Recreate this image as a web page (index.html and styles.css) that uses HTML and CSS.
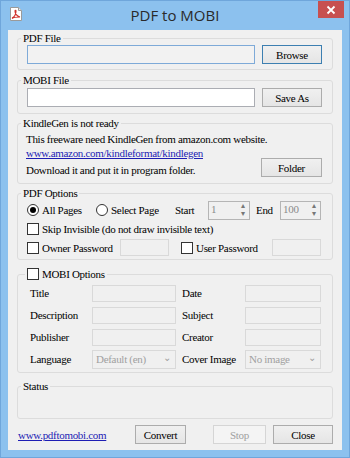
FILE: index.html
```html
<!DOCTYPE html>
<html lang="en">
<head>
    <meta charset="UTF-8">
    <meta name="viewport" content="width=device-width, initial-scale=1.0">
    <title>PDF to MOBI</title>
    <link rel="stylesheet" href="styles.css">
</head>
<body>
<div class="window">
    <div class="titlebar">
        <svg class="app-icon" width="16" height="16" viewBox="0 0 16 16">
            <path d="M2.5 1.5h8l3 3v10h-11z" fill="#fff" stroke="#9a9a9a"/>
            <path d="M10.5 1.5v3h3" fill="#e8e8e8" stroke="#9a9a9a"/>
            <path d="M4 12c2-1 4-4 4-7 0-1-1-1-1 0 0 3 2 5 5 6-2 0-6 0-8 1.5" fill="none" stroke="#d0302a" stroke-width="1.1"/>
        </svg>
        <div class="title">PDF to MOBI</div>
        <div class="close">
            <svg width="10" height="10" viewBox="0 0 10 10">
                <path d="M1.5 1.5l7 7M8.5 1.5l-7 7" stroke="#fff" stroke-width="1.8"/>
            </svg>
        </div>
    </div>

    <div class="client">
        <fieldset class="group g-pdf">
            <legend>PDF File</legend>
            <div class="file-row">
                <div class="field path"></div>
                <button class="btn default">Browse</button>
            </div>
        </fieldset>

        <fieldset class="group g-mobi">
            <legend>MOBI File</legend>
            <div class="file-row">
                <div class="field"></div>
                <button class="btn">Save As</button>
            </div>
        </fieldset>

        <fieldset class="group g-kindle">
            <legend>KindleGen is not ready</legend>
            <div class="kindle-body">
                <div class="line">This freeware need KindleGen from amazon.com website.</div>
                <div class="line"><a href="#">www.amazon.com/kindleformat/kindlegen</a></div>
                <div class="line folder-row">
                    <span>Download it and put it in program folder.</span>
                    <button class="btn">Folder</button>
                </div>
            </div>
        </fieldset>

        <fieldset class="group g-options">
            <legend>PDF Options</legend>
            <div class="options-body">
                <div class="pages-row">
                    <label class="opt"><span class="radio on"></span>All Pages</label>
                    <label class="opt"><span class="radio"></span>Select Page</label>
                    <span class="opt">Start</span>
                    <div class="spin"><span class="val">1</span><span class="arrows"><i>&#9652;</i><i>&#9662;</i></span></div>
                    <span></span>
                    <span class="opt">End</span>
                    <div class="spin"><span class="val">100</span><span class="arrows"><i>&#9652;</i><i>&#9662;</i></span></div>
                </div>
                <label class="opt skip-row"><span class="check"></span>Skip Invisible (do not draw invisible text)</label>
                <div class="pass-row">
                    <label class="opt"><span class="check"></span>Owner Password</label>
                    <div class="field off"></div>
                    <span></span>
                    <label class="opt"><span class="check"></span>User Password</label>
                    <div class="field off"></div>
                </div>
            </div>
        </fieldset>

        <fieldset class="group g-meta">
            <legend><label class="opt"><span class="check"></span>MOBI Options</label></legend>
            <div class="meta-grid">
                <span>Title</span><div class="field off"></div><span></span>
                <span>Date</span><div class="field off"></div>
                <span>Description</span><div class="field off"></div><span></span>
                <span>Subject</span><div class="field off"></div>
                <span>Publisher</span><div class="field off"></div><span></span>
                <span>Creator</span><div class="field off"></div>
                <span>Language</span><div class="combo">Default (en)<i>&#8964;</i></div><span></span>
                <span>Cover Image</span><div class="combo">No image<i>&#8964;</i></div>
            </div>
        </fieldset>

        <fieldset class="group g-status">
            <legend>Status</legend>
        </fieldset>

        <div class="footer">
            <a href="#">www.pdftomobi.com</a>
            <button class="btn b-convert">Convert</button>
            <button class="btn b-stop" disabled>Stop</button>
            <button class="btn b-close">Close</button>
        </div>
    </div>
</div>
</body>
</html>
```

FILE: styles.css
```css
body {
    margin: 0;
    font-family: "Liberation Serif", serif;
    font-size: 11px;
    letter-spacing: -0.3px;
    color: #000;
}
.window {
    width: 350px;
    height: 458px;
    box-sizing: border-box;
    background: #8cc1ee;
    border: 1px solid #6fa6db;
    display: flex;
    flex-direction: column;
}
.titlebar {
    height: 29px;
    display: grid;
    grid-template-columns: 1fr auto 1fr;
    align-items: start;
}
.app-icon {
    margin: 5px 0 0 7px;
}
.title {
    font-family: "Open Sans", sans-serif;
    font-size: 15px;
    letter-spacing: normal;
    line-height: 28px;
    color: #2a2a2a;
}
.close {
    justify-self: end;
    width: 26px;
    height: 17px;
    margin-right: 5px;
    background: #c75050;
    display: flex;
    align-items: center;
    justify-content: center;
}
.client {
    flex: 1;
    margin: 0 7px 7px;
    background: #f0f0f0;
    display: flex;
    flex-direction: column;
}

/* group boxes */
.group {
    box-sizing: border-box;
    margin: 0 9px;
    padding: 0;
    border: 1px solid #dcdcdc;
    border-radius: 3px;
}
.group legend {
    margin-left: 3px;
    padding: 0 2px;
    line-height: 12px;
}
.g-pdf { margin-top: 2px; height: 38px; }
.g-mobi { margin-top: 4px; height: 40px; }
.g-kindle { margin-top: 3px; height: 67px; }
.g-options { margin-top: 3px; height: 73px; }
.g-meta { margin-top: 7px; height: 106px; }
.g-meta legend { margin-left: 7px; line-height: 14px; }
.g-status { margin-top: 7px; height: 39px; }

.file-row {
    display: flex;
    gap: 7px;
    padding: 0 10px 0 9px;
    margin-top: 1px;
}
.g-mobi .file-row { margin-top: 2px; }
.field {
    box-sizing: border-box;
    flex: 1;
    height: 19px;
    background: #fff;
    border: 1px solid #abadb3;
}
.field.path {
    background: #f2f2f2;
    border-color: #7eaad8;
}
.field.off {
    height: 17px;
    background: #f0f0f0;
    border-color: #d9d9d9;
}

.btn {
    box-sizing: border-box;
    width: 60px;
    height: 19px;
    padding: 0;
    font: inherit;
    letter-spacing: inherit;
    color: #000;
    background: linear-gradient(#f0f0f0, #e5e5e5);
    border: 1px solid #acacac;
}
.btn.default { border-color: #3c7fb1; }
.btn:disabled {
    color: #a0a0a0;
    background: #f4f4f4;
    border-color: #d5d5d5;
}

.kindle-body {
    padding: 3px 10px 0 8px;
}
.line {
    line-height: 14px;
}
.kindle-body a,
.footer a {
    color: #1d1db4;
}
.folder-row {
    display: flex;
    justify-content: space-between;
    align-items: center;
    margin-top: 2px;
}
.folder-row .btn {
    width: 61px;
    margin-top: -4px;
}

/* pdf options */
.options-body {
    padding: 1px 0 0 9px;
}
.opt {
    display: flex;
    align-items: center;
    white-space: nowrap;
}
.pages-row {
    display: grid;
    grid-template-columns: 69px 79px 33px 42px 6px 24px 41px;
    height: 20px;
    align-items: center;
}
.skip-row {
    height: 18px;
}
.pass-row {
    display: grid;
    grid-template-columns: 93px 49px 12px 91px 49px;
    height: 19px;
    align-items: center;
}
.radio {
    box-sizing: border-box;
    width: 12px;
    height: 12px;
    margin-right: 3px;
    border: 1px solid #333;
    border-radius: 50%;
    background: #fff;
    display: flex;
    align-items: center;
    justify-content: center;
}
.radio.on::after {
    content: "";
    width: 6px;
    height: 6px;
    border-radius: 50%;
    background: #000;
}
.check {
    box-sizing: border-box;
    width: 12px;
    height: 12px;
    margin-right: 3px;
    border: 1px solid #333;
    background: #fff;
}
.spin {
    box-sizing: border-box;
    height: 19px;
    display: flex;
    border: 1px solid #b5b5b5;
    background: #f0f0f0;
    color: #8a8a8a;
}
.spin .val {
    flex: 1;
    padding-left: 2px;
    line-height: 15px;
}
.spin .arrows {
    width: 12px;
    display: flex;
    flex-direction: column;
}
.spin .arrows i {
    flex: 1;
    font-style: normal;
    font-size: 8px;
    line-height: 8px;
    text-align: center;
    color: #777;
}

/* mobi options */
.meta-grid {
    display: grid;
    grid-template-columns: 62px 84px 6px 63px 76px;
    grid-auto-rows: 22px;
    align-items: center;
    padding: 1px 0 0 12px;
}
.combo {
    box-sizing: border-box;
    height: 19px;
    display: flex;
    justify-content: space-between;
    align-items: center;
    padding: 0 4px 0 3px;
    border: 1px solid #d9d9d9;
    color: #a0a0a0;
}
.combo i {
    font-style: normal;
    font-size: 10px;
    margin-top: -4px;
}

/* footer */
.footer {
    display: flex;
    align-items: center;
    height: 19px;
    margin: 6px 9px 0 10px;
}
.footer .b-convert { width: 51px; margin-left: auto; }
.footer .b-stop { width: 53px; margin-left: 27px; }
.footer .b-close { width: 60px; margin-left: 7px; }
```
